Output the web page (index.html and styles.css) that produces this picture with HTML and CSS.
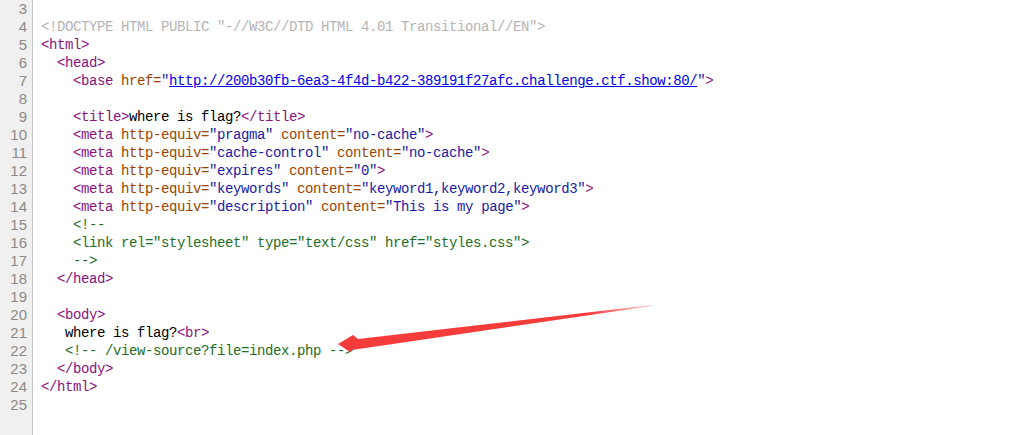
FILE: index.html
```html
<!DOCTYPE html>
<html>
<head>
<meta charset="utf-8">
<title>where is flag?</title>
<link rel="stylesheet" href="styles.css">
</head>
<body>
<div class="editor">
  <div class="gutter">
    <div class="ln">3</div><div class="ln">4</div><div class="ln">5</div><div class="ln">6</div><div class="ln">7</div><div class="ln">8</div><div class="ln">9</div><div class="ln">10</div><div class="ln">11</div><div class="ln">12</div><div class="ln">13</div><div class="ln">14</div><div class="ln">15</div><div class="ln">16</div><div class="ln">17</div><div class="ln">18</div><div class="ln">19</div><div class="ln">20</div><div class="ln">21</div><div class="ln">22</div><div class="ln">23</div><div class="ln">24</div><div class="ln">25</div>
  </div>
  <div class="code">
<div class="line"> </div>
<div class="line"><span class="dt">&lt;!DOCTYPE HTML PUBLIC "-//W3C//DTD HTML 4.01 Transitional//EN"&gt;</span></div>
<div class="line"><span class="tg">&lt;html&gt;</span></div>
<div class="line">  <span class="tg">&lt;head&gt;</span></div>
<div class="line">    <span class="tg">&lt;base </span><span class="at">href=</span><span class="vl">"</span><a class="lk" href="#">http://200b30fb-6ea3-4f4d-b422-389191f27afc.challenge.ctf.show:80/</a><span class="vl">"</span><span class="tg">&gt;</span></div>
<div class="line"> </div>
<div class="line">    <span class="tg">&lt;title&gt;</span>where is flag?<span class="tg">&lt;/title&gt;</span></div>
<div class="line">    <span class="tg">&lt;meta </span><span class="at">http-equiv=</span><span class="vl">"pragma"</span> <span class="at">content=</span><span class="vl">"no-cache"</span><span class="tg">&gt;</span></div>
<div class="line">    <span class="tg">&lt;meta </span><span class="at">http-equiv=</span><span class="vl">"cache-control"</span> <span class="at">content=</span><span class="vl">"no-cache"</span><span class="tg">&gt;</span></div>
<div class="line">    <span class="tg">&lt;meta </span><span class="at">http-equiv=</span><span class="vl">"expires"</span> <span class="at">content=</span><span class="vl">"0"</span><span class="tg">&gt;</span></div>
<div class="line">    <span class="tg">&lt;meta </span><span class="at">http-equiv=</span><span class="vl">"keywords"</span> <span class="at">content=</span><span class="vl">"keyword1,keyword2,keyword3"</span><span class="tg">&gt;</span></div>
<div class="line">    <span class="tg">&lt;meta </span><span class="at">http-equiv=</span><span class="vl">"description"</span> <span class="at">content=</span><span class="vl">"This is my page"</span><span class="tg">&gt;</span></div>
<div class="line">    <span class="cm">&lt;!--</span></div>
<div class="line">    <span class="cm">&lt;link rel="stylesheet" type="text/css" href="styles.css"&gt;</span></div>
<div class="line">    <span class="cm">--&gt;</span></div>
<div class="line">  <span class="tg">&lt;/head&gt;</span></div>
<div class="line"> </div>
<div class="line">  <span class="tg">&lt;body&gt;</span></div>
<div class="line">   where is flag?<span class="tg">&lt;br&gt;</span></div>
<div class="line">   <span class="cm">&lt;!-- /view-source?file=index.php --&gt;</span></div>
<div class="line">  <span class="tg">&lt;/body&gt;</span></div>
<div class="line"><span class="tg">&lt;/html&gt;</span></div>
<div class="line"> </div>
  </div>
  <svg class="arrow" width="1032" height="435" viewBox="0 0 1032 435" aria-hidden="true">
    <defs>
      <linearGradient id="fade" x1="338" y1="0" x2="652" y2="0" gradientUnits="userSpaceOnUse">
        <stop offset="0" stop-color="#f63b3b"/>
        <stop offset="0.8" stop-color="#f63b3b"/>
        <stop offset="1" stop-color="#f63b3b" stop-opacity="0.25"/>
      </linearGradient>
    </defs>
    <polygon points="652,305 358,339 353,335 338,344 350,352 352,350 652,306" fill="url(#fade)"/>
  </svg>
</div>
</body>
</html>
```

FILE: styles.css
```css
html, body {
  margin: 0;
  padding: 0;
  background: #ffffff;
}
body {
  width: 1032px;
  height: 435px;
  overflow: hidden;
}
.editor {
  position: relative;
  display: flex;
  height: 435px;
}
.gutter {
  width: 33px;
  flex: 0 0 33px;
  background: #f0f0f0;
  border-right: 1px solid #c4c4c4;
  box-sizing: border-box;
  padding-right: 5px;
}
.ln {
  height: 18px;
  line-height: 18px;
  text-align: right;
  font-family: "Liberation Sans", Arial, sans-serif;
  font-size: 15px;
  color: #8e8a86;
}
.code {
  padding-left: 8px;
  font-family: "Liberation Mono", "DejaVu Sans Mono", monospace;
  font-size: 14px;
  letter-spacing: -0.4px;
  color: #000000;
}
.line {
  height: 18px;
  line-height: 18px;
  white-space: pre;
}
.dt { color: #b4b4b4; }
.tg { color: #881280; }
.at { color: #994500; }
.vl { color: #1a1aa6; }
.lk { color: #0000ee; text-decoration: underline; }
.cm { color: #236e25; }
.arrow {
  position: absolute;
  left: 0;
  top: 0;
  pointer-events: none;
}
```
